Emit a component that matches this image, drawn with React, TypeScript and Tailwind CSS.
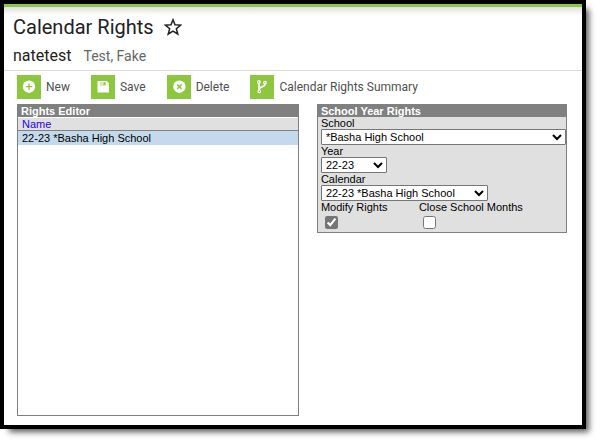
import { useState } from 'react'
import type { ReactNode } from 'react'

const calendars = [{ id: 1, name: '22-23 *Basha High School' }]

const selectClass =
  'block h-4 border border-[#767676] rounded-[1px] bg-white text-black text-[11px] leading-none'

function StarIcon() {
  return (
    <svg viewBox="0 0 18 18" className="w-[18px] h-[18px]" fill="none" stroke="#222" strokeWidth="1.5" strokeLinejoin="miter">
      <path d="M9 1.8 L11 6.8 L16.6 7.1 L12.3 10.7 L13.8 16 L9 13.1 L4.2 16 L5.7 10.7 L1.4 7.1 L7 6.8 Z" />
    </svg>
  )
}

function NewIcon() {
  return (
    <svg viewBox="0 0 24 24" className="w-6 h-6">
      <circle cx="12" cy="11.7" r="6.2" fill="#fff" />
      <path d="M12 8.5v6.4M8.8 11.7h6.4" stroke="#8dc63f" strokeWidth="1.3" />
    </svg>
  )
}

function SaveIcon() {
  return (
    <svg viewBox="0 0 24 24" className="w-6 h-6">
      <path d="M6.5 6h9.3L18 8.2v9.3H6.5z" fill="#fff" />
      <path d="M9 7h6v4H9z" fill="#d5eab5" />
      <path d="M12.7 7.2h1.6v2.6h-1.6z" fill="#8dc63f" />
    </svg>
  )
}

function DeleteIcon() {
  return (
    <svg viewBox="0 0 24 24" className="w-6 h-6">
      <circle cx="12.4" cy="11.7" r="6.2" fill="#fff" />
      <path d="M10.1 9.4l4.6 4.6M14.7 9.4l-4.6 4.6" stroke="#8dc63f" strokeWidth="1.5" />
    </svg>
  )
}

function BranchIcon() {
  return (
    <svg viewBox="0 0 24 24" className="w-6 h-6" fill="none" stroke="#fff" strokeWidth="1.2">
      <circle cx="8.8" cy="7" r="1.3" />
      <circle cx="9.3" cy="16.4" r="1.3" />
      <circle cx="15" cy="7.6" r="1.3" />
      <path d="M9 8.5v6.5M15 9c0 3.6-5.6 2.2-5.8 5.2" strokeWidth="1.7" />
    </svg>
  )
}

function ToolbarButton({ icon, children }: { icon: ReactNode; children: ReactNode }) {
  return (
    <button type="button" className="flex items-center gap-[5px] text-[12px] text-[#505050] whitespace-nowrap cursor-pointer">
      <span className="bg-[#8dc63f]">{icon}</span>
      {children}
    </button>
  )
}

export default function App() {
  const [selected, setSelected] = useState(1)
  const [modify, setModify] = useState(true)
  const [closeMonths, setCloseMonths] = useState(false)

  return (
    <div className="min-h-screen flex bg-white pr-[15px] pb-[15px] font-['Roboto',sans-serif]">
      <main className="flex-1 flex flex-col bg-white border-4 border-black shadow-[6px_6px_6px_-3px_rgba(0,0,0,0.65)]">
        <div className="h-[3px] bg-[#8dc63f]" />
        <div className="h-2 bg-linear-to-b from-[#dedede] to-white" />

        <header className="px-[9px] pb-1 border-b border-[#dcdcdc]">
          <div className="flex items-center gap-2.5 h-6">
            <h1 className="text-[20px] leading-6 text-[#222]">Calendar Rights</h1>
            <button type="button" aria-label="Favorite" className="cursor-pointer">
              <StarIcon />
            </button>
          </div>
          <div className="flex items-baseline gap-3 pt-[7px] leading-5">
            <span className="text-[16px] text-[#222]">natetest</span>
            <span className="text-[14px] text-[#666]">Test, Fake</span>
          </div>
        </header>

        {/* Toolbar */}
        <div className="flex gap-[21px] px-[13px] pt-1 pb-[5px]">
          <ToolbarButton icon={<NewIcon />}>New</ToolbarButton>
          <ToolbarButton icon={<SaveIcon />}>Save</ToolbarButton>
          <ToolbarButton icon={<DeleteIcon />}>Delete</ToolbarButton>
          <ToolbarButton icon={<BranchIcon />}>Calendar Rights Summary</ToolbarButton>
        </div>

        <div className="flex-1 flex items-start gap-[18px] pl-[13px] pr-[15px] pb-[9px] font-['Liberation_Sans',Arial,sans-serif] text-[11px] leading-3 text-black">
          {/* Calendar list */}
          <section className="self-stretch flex-[282] border border-[#808080]">
            <h2 className="h-3 bg-[#808080] pl-[3px] font-bold text-white">Rights Editor</h2>
            <table className="w-full text-left">
              <thead>
                <tr className="bg-[#e0e0e0] border-t border-white border-b border-b-[#808080]">
                  <th className="h-[13px] p-0 pl-1 font-normal">
                    <a href="#name" className="text-[#2a00f5]">Name</a>
                  </th>
                </tr>
              </thead>
              <tbody>
                {calendars.map((calendar) => (
                  <tr
                    key={calendar.id}
                    onClick={() => setSelected(calendar.id)}
                    className={selected === calendar.id ? 'bg-[#c4daec]' : 'bg-white'}
                  >
                    <td className="h-[14px] p-0 pl-1">{calendar.name}</td>
                  </tr>
                ))}
              </tbody>
            </table>
          </section>

          {/* Rights detail */}
          <section className="flex-[250] border border-[#808080] bg-[#e0e0e0]">
            <h2 className="h-3 bg-[#808080] pl-[3px] font-bold text-white">School Year Rights</h2>
            <div className="pl-[3px]">
              <label htmlFor="school" className="block">School</label>
              <select id="school" className={`${selectClass} w-full`}>
                <option>*Basha High School</option>
              </select>
              <label htmlFor="year" className="block">Year</label>
              <select id="year" className={`${selectClass} w-[66px]`}>
                <option>22-23</option>
              </select>
              <label htmlFor="calendar" className="block">Calendar</label>
              <select id="calendar" className={`${selectClass} w-[167px]`}>
                <option>22-23 *Basha High School</option>
              </select>
              <div className="flex">
                <div className="w-[98px]">
                  <label htmlFor="modify" className="block">Modify Rights</label>
                  <input
                    id="modify"
                    type="checkbox"
                    checked={modify}
                    onChange={(e) => setModify(e.target.checked)}
                    className="block w-[13px] h-[13px] ml-1 my-[3px] accent-[#767676]"
                  />
                </div>
                <div>
                  <label htmlFor="close-months" className="block">Close School Months</label>
                  <input
                    id="close-months"
                    type="checkbox"
                    checked={closeMonths}
                    onChange={(e) => setCloseMonths(e.target.checked)}
                    className="block w-[13px] h-[13px] ml-1 my-[3px] accent-[#767676]"
                  />
                </div>
              </div>
            </div>
          </section>
        </div>
      </main>
    </div>
  )
}
